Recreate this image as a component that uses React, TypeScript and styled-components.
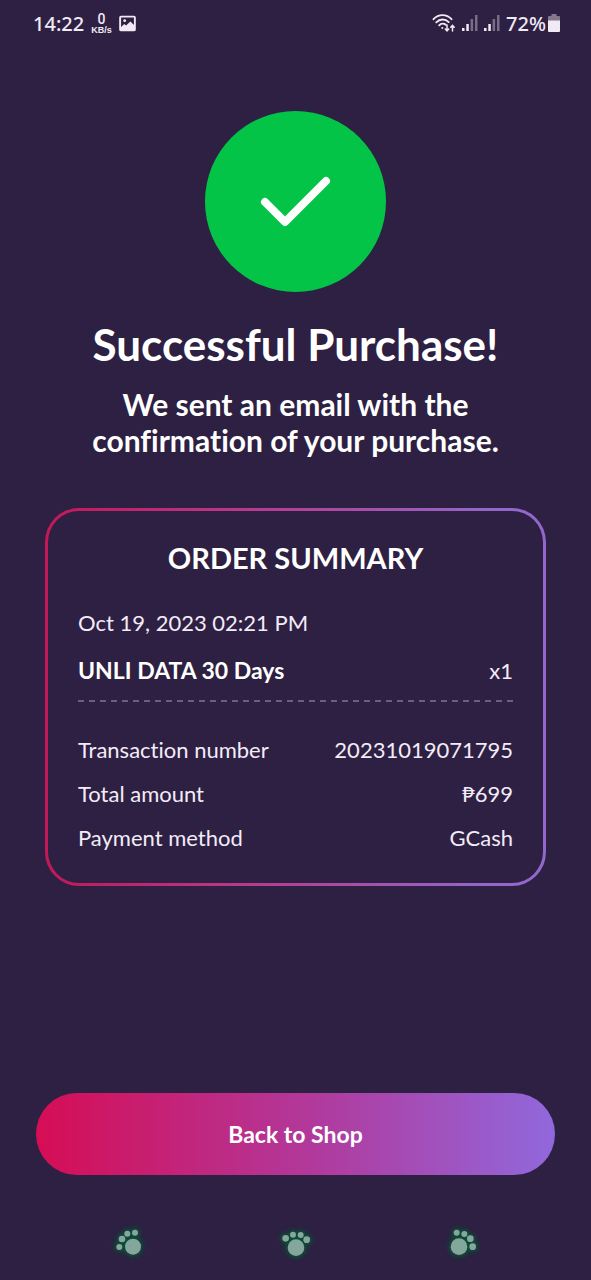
import React from "react";
import styled, { createGlobalStyle } from "styled-components";

const GlobalStyle = createGlobalStyle`
  * { box-sizing: border-box; }
  body {
    margin: 0;
    background: #2e2042;
    color: #fff;
    font-family: Lato, "Liberation Sans", sans-serif;
    font-variant-ligatures: none;
  }
  h1, h2, p, dl, dd, dt { margin: 0; }
`;

const Screen = styled.div`
  min-height: 100vh;
  display: flex;
  flex-direction: column;
  background: #2e2042;
`;

const StatusBar = styled.header`
  height: 46px;
  padding: 0 31px 0 33px;
  display: flex;
  align-items: center;
  justify-content: space-between;
  color: #f1eaf5;
  font-family: "Noto Sans", sans-serif;
  font-size: 20px;
  font-weight: 500;
`;

const StatusGroup = styled.div<{ $gap: number }>`
  display: flex;
  align-items: center;
  gap: ${(p) => p.$gap}px;
`;

const NetSpeed = styled.span`
  display: flex;
  flex-direction: column;
  align-items: center;
  font-family: Roboto, sans-serif;
  font-size: 14px;
  line-height: 14px;
`;

const NetUnit = styled.span`
  font-family: "Liberation Sans", sans-serif;
  font-size: 9px;
  font-weight: 700;
  line-height: 9px;
`;

const Main = styled.main`
  flex: 1;
  display: flex;
  flex-direction: column;
  align-items: center;
  padding: 65px 36px 0;
`;

const SuccessBadge = styled.div`
  width: 181px;
  height: 181px;
  border-radius: 50%;
  background: #04c448;
`;

const Title = styled.h1`
  margin-top: 26px;
  font-size: 44px;
  line-height: 52px;
  font-weight: 700;
  text-align: center;
`;

const Message = styled.p`
  max-width: 440px;
  margin-top: 16px;
  font-size: 30px;
  line-height: 36px;
  font-weight: 700;
  text-align: center;
`;

const SummaryCard = styled.section`
  align-self: stretch;
  margin: 50px 9px 0;
  padding: 29px 30px 24px;
  border: 3px solid transparent;
  border-radius: 34px;
  background:
    linear-gradient(#2e2042, #2e2042) padding-box,
    linear-gradient(90deg, #c21858, #b83a8c 40%, #9268cc 90%) border-box;
`;

const SummaryTitle = styled.h2`
  font-size: 29px;
  line-height: 36px;
  font-weight: 700;
  text-align: center;
`;

const OrderDate = styled.p`
  margin-top: 31px;
  font-size: 22px;
  line-height: 32px;
  color: #f3ecf8;
`;

const Row = styled.div<{ $height: number }>`
  display: flex;
  align-items: center;
  justify-content: space-between;
  height: ${(p) => p.$height}px;
  font-size: 22px;
  color: #f3ecf8;
`;

const ItemRow = styled(Row)`
  margin-top: 7px;
`;

const ItemName = styled.strong`
  color: #fff;
  font-size: 23px;
  font-weight: 700;
`;

const Divider = styled.hr`
  height: 2px;
  margin: 6px 0 25px;
  border: 0;
  background: repeating-linear-gradient(90deg, #6b5e7e 0 6px, transparent 6px 11px);
`;

const ShopButton = styled.button`
  align-self: stretch;
  height: 82px;
  margin-top: auto;
  border: 0;
  border-radius: 41px;
  background: linear-gradient(90deg, #d60d55, #b2389a 52%, #9168dc);
  color: #fff;
  font: 700 23px/32px Lato, "Liberation Sans", sans-serif;
`;

const NavBar = styled.nav`
  display: flex;
  justify-content: space-around;
  padding: 40px 48px 5px;
`;

const NavButton = styled.button`
  flex: 1;
  height: 60px;
  padding: 0;
  border: 0;
  background: none;
  display: flex;
  justify-content: center;
`;

const PhotoIcon = () => (
  <svg width="17" height="17" viewBox="0 0 18 18" fill="none">
    <rect x="1.2" y="1.7" width="15.6" height="14.6" rx="1" stroke="#f1eaf5" strokeWidth="2" />
    <circle cx="6" cy="6" r="1.5" fill="#f1eaf5" />
    <path d="M2 13l3.5-3.5 2 1.6L12 6.8l4.500 4.200V16H2z" fill="#f1eaf5" />
  </svg>
);

const WifiIcon = () => (
  <svg width="24" height="20" viewBox="0 0 24 20" fill="none" stroke="#f1eaf5" strokeWidth="1.900" strokeLinecap="round">
    <path d="M1.500 6.200C6.500.800 14.500.800 19.500 6.200M4.300 9.300c3.500-3.700 9-3.700 12.400-.2M7.200 12.300c1.900-2 4.700-2.100 6.600-.5" />
    <circle cx="10.300" cy="15" r="1" fill="#f1eaf5" stroke="none" />
    <path d="M15 12v5.500M13.300 16l1.700 1.900 1.700-1.900M20.500 18v-5.500M18.800 14.200l1.700-1.900 1.700 1.900" strokeWidth="1.500" />
  </svg>
);

const SignalIcon = () => (
  <svg width="16" height="18" viewBox="0 0 16 18">
    <rect x="0" y="14" width="2.500" height="3" fill="#f1eaf5" />
    <rect x="4.300" y="10" width="2.500" height="7" fill="#f1eaf5" />
    <rect x="8.600" y="5" width="2.500" height="12" fill="#786c88" />
    <rect x="13" y="1" width="2.500" height="16" fill="#786c88" />
  </svg>
);

const BatteryIcon = () => (
  <svg width="12" height="18" viewBox="0 0 12 18">
    <path d="M3.500 0h5v2H11a1 1 0 0 1 1 1v4H0V3a1 1 0 0 1 1-1h2.500z" fill="#83778f" />
    <path d="M0 6.500h12V17a1 1 0 0 1-1 1H1a1 1 0 0 1-1-1z" fill="#f1eaf5" />
  </svg>
);

type Dot = [number, number, number];

const PAWS: { label: string; dots: Dot[] }[] = [
  { label: "Recents", dots: [[96, 95, 24], [55, 96, 9], [63, 72, 10], [79, 56, 9], [102, 53, 9]] },
  { label: "Home", dots: [[90, 98, 25], [59, 70, 10], [81, 59, 9], [104, 60, 9], [122, 74, 10]] },
  { label: "Back", dots: [[84, 95, 25], [77, 53, 9], [100, 57, 9], [118, 71, 10], [125, 95, 10]] },
];

const PawIcon = ({ dots }: { dots: Dot[] }) => (
  <svg width="60" height="60" viewBox="0 0 180 180">
    <defs>
      <filter id="glow" x="-40%" y="-40%" width="180%" height="180%">
        <feGaussianBlur stdDeviation="6" />
      </filter>
    </defs>
    <g fill="#0f4a37" filter="url(#glow)">
      {dots.map(([x, y, r]) => (
        <circle key={`${x}-${y}`} cx={x} cy={y} r={r + 7} />
      ))}
    </g>
    <g fill="#84a79b">
      {dots.map(([x, y, r]) => (
        <circle key={`${x}-${y}`} cx={x} cy={y} r={r} />
      ))}
    </g>
  </svg>
);

const DETAILS = [
  ["Transaction number", "20231019071795"],
  ["Total amount", "₱699"],
  ["Payment method", "GCash"],
];

export default function App() {
  return (
    <Screen>
      <GlobalStyle />
      <StatusBar>
        <StatusGroup $gap={7}>
          <span>14:22</span>
          <NetSpeed>
            0<NetUnit>KB/s</NetUnit>
          </NetSpeed>
          <PhotoIcon />
        </StatusGroup>
        <StatusGroup $gap={6}>
          <WifiIcon />
          <SignalIcon />
          <SignalIcon />
          <StatusGroup $gap={2}>
            <span>72%</span>
            <BatteryIcon />
          </StatusGroup>
        </StatusGroup>
      </StatusBar>
      <Main>
        <SuccessBadge>
          <svg width="181" height="181" viewBox="0 0 181 181" fill="none">
            <path d="M60 91l20 20L121 70" stroke="#fff" strokeWidth="8" strokeLinecap="round" strokeLinejoin="round" />
          </svg>
        </SuccessBadge>
        <Title>Successful Purchase!</Title>
        <Message>We sent an email with the confirmation of your purchase.</Message>
        <SummaryCard>
          <SummaryTitle>ORDER SUMMARY</SummaryTitle>
          <OrderDate>Oct 19, 2023 02:21 PM</OrderDate>
          <ItemRow $height={48}>
            <ItemName>UNLI DATA 30 Days</ItemName>
            <span>x1</span>
          </ItemRow>
          <Divider />
          <dl>
            {DETAILS.map(([label, value]) => (
              <Row key={label} $height={44}>
                <dt>{label}</dt>
                <dd>{value}</dd>
              </Row>
            ))}
          </dl>
        </SummaryCard>
        <ShopButton type="button">Back to Shop</ShopButton>
      </Main>
      <NavBar>
        {PAWS.map(({ label, dots }) => (
          <NavButton key={label} type="button" aria-label={label}>
            <PawIcon dots={dots} />
          </NavButton>
        ))}
      </NavBar>
    </Screen>
  );
}
